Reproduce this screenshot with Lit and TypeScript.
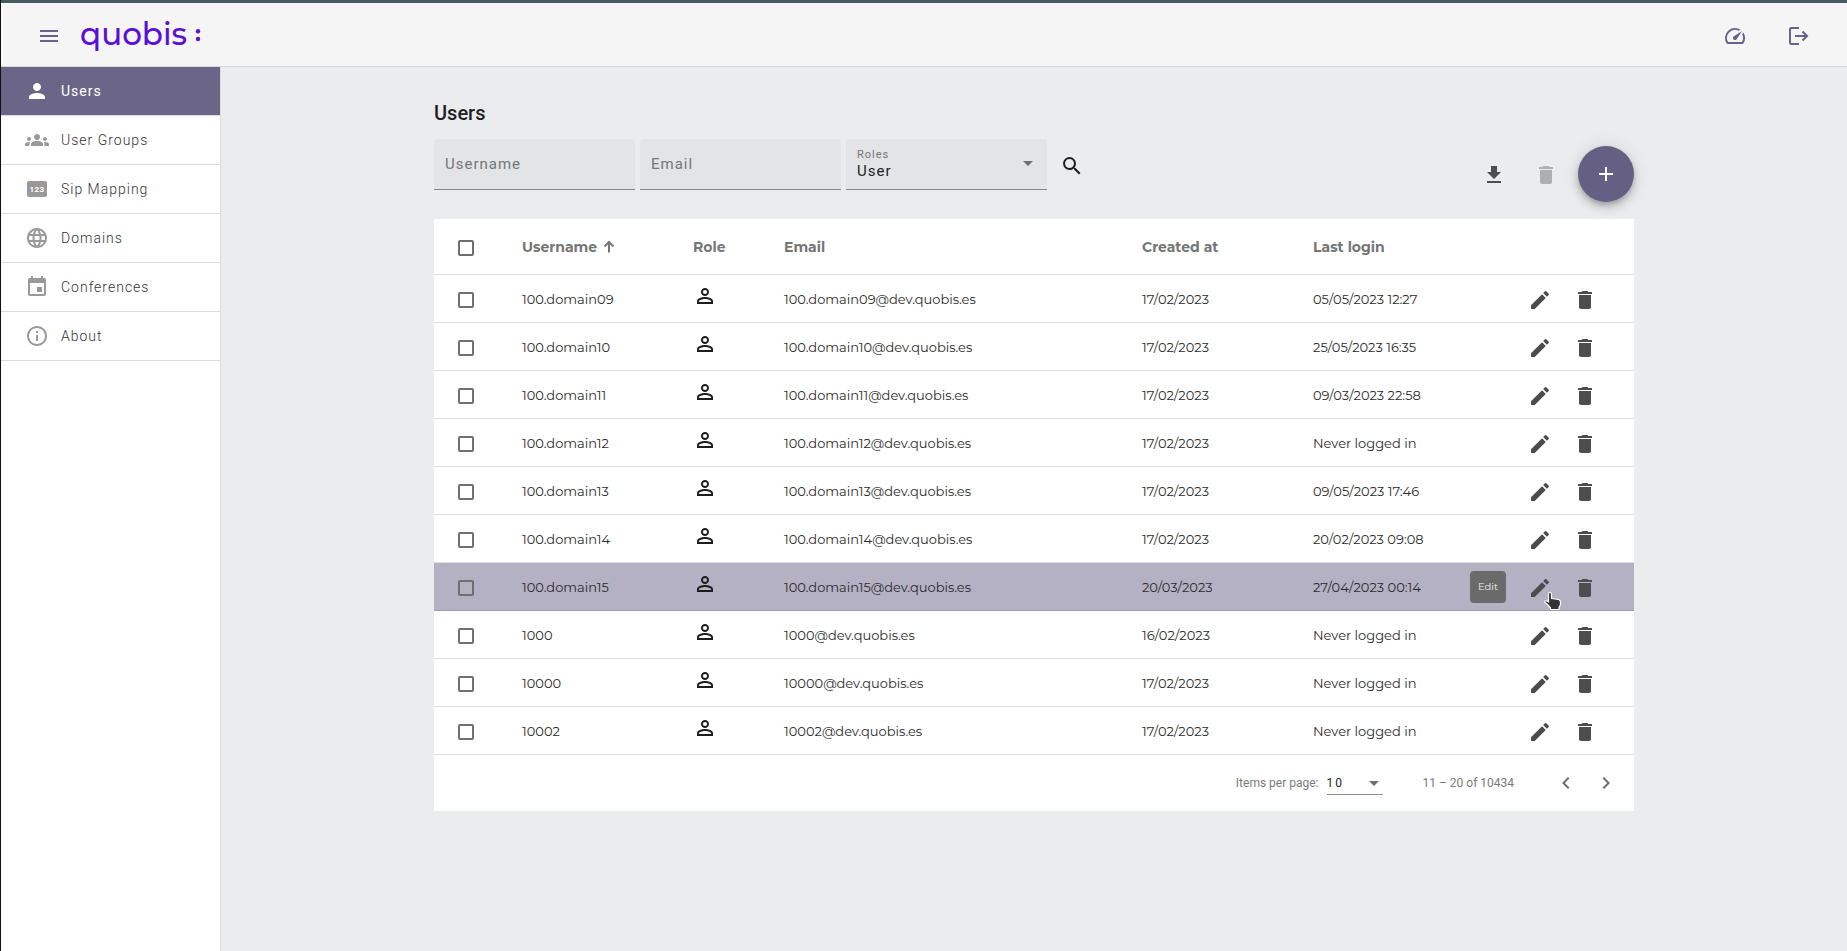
import { LitElement, html, css, svg } from "lit";
import { customElement, property, state } from "lit/decorators.js";
import { classMap } from "lit/directives/class-map.js";

const ICONS: Record<string, unknown> = {
  menu: svg`<path d="M3 18h18v-2H3v2zm0-5h18v-2H3v2zm0-7v2h18V6H3z"/>`,
  person: svg`<path d="M12 12c2.21 0 4-1.79 4-4s-1.79-4-4-4-4 1.79-4 4 1.79 4 4 4zm0 2c-2.67 0-8 1.34-8 4v2h16v-2c0-2.66-5.33-4-8-4z"/>`,
  personOutline: svg`<path d="M12 5.9a2.1 2.1 0 1 1 0 4.2 2.1 2.1 0 0 1 0-4.2m0 9c2.97 0 6.1 1.46 6.1 2.1v1.1H5.9V17c0-.64 3.13-2.1 6.1-2.1M12 4C9.79 4 8 5.79 8 8s1.79 4 4 4 4-1.79 4-4-1.79-4-4-4zm0 9c-2.67 0-8 1.34-8 4v3h16v-3c0-2.66-5.33-4-8-4z"/>`,
  groups: svg`<path d="M12 12.75c1.63 0 3.07.39 4.24.9 1.08.48 1.76 1.56 1.76 2.73V18H6v-1.61c0-1.18.68-2.26 1.76-2.73 1.17-.52 2.61-.91 4.24-.91zM4 13c1.1 0 2-.9 2-2s-.9-2-2-2-2 .9-2 2 .9 2 2 2zm1.13 1.1c-.37-.06-.74-.1-1.13-.1-.99 0-1.93.21-2.78.58C.48 14.9 0 15.62 0 16.43V18h4.5v-1.61c0-.83.23-1.61.63-2.29zM20 13c1.1 0 2-.9 2-2s-.9-2-2-2-2 .9-2 2 .9 2 2 2zm4 3.43c0-.81-.48-1.53-1.22-1.85-.85-.37-1.79-.58-2.78-.58-.39 0-.76.04-1.13.1.4.68.63 1.46.63 2.29V18H24v-1.57zM12 6c1.66 0 3 1.34 3 3s-1.34 3-3 3-3-1.34-3-3 1.34-3 3-3z"/>`,
  digits: svg`<rect x="2" y="4" width="20" height="16" rx="2"/><text x="12" y="15" text-anchor="middle" font-family="Roboto, sans-serif" font-size="8" font-weight="700" letter-spacing="0.4" fill="#fff">123</text>`,
  globe: svg`<path d="M11.99 2C6.47 2 2 6.48 2 12s4.47 10 9.99 10C17.52 22 22 17.52 22 12S17.52 2 11.99 2zm6.93 6h-2.95c-.32-1.25-.78-2.45-1.38-3.56 1.84.63 3.37 1.91 4.33 3.56zM12 4.04c.83 1.2 1.48 2.53 1.91 3.96h-3.82c.43-1.43 1.08-2.76 1.91-3.96zM4.26 14C4.1 13.36 4 12.69 4 12s.1-1.36.26-2h3.38c-.08.66-.14 1.32-.14 2 0 .68.06 1.34.14 2H4.26zm.82 2h2.95c.32 1.25.78 2.45 1.38 3.56-1.84-.63-3.37-1.9-4.33-3.56zm2.95-8H5.08c.96-1.66 2.49-2.93 4.33-3.56C8.81 5.55 8.35 6.75 8.03 8zM12 19.96c-.83-1.2-1.48-2.53-1.91-3.96h3.82c-.43 1.43-1.08 2.76-1.91 3.96zM14.34 14H9.66c-.09-.66-.16-1.32-.16-2 0-.68.07-1.35.16-2h4.68c.09.65.16 1.32.16 2 0 .68-.07 1.34-.16 2zm.25 5.56c.6-1.11 1.06-2.31 1.38-3.56h2.95c-.96 1.65-2.49 2.93-4.33 3.56zM16.36 14c.08-.66.14-1.32.14-2 0-.68-.06-1.34-.14-2h3.38c.16.64.26 1.31.26 2s-.1 1.36-.26 2h-3.38z"/>`,
  event: svg`<path d="M17 12h-5v5h5v-5zM16 1v2H8V1H6v2H5c-1.11 0-1.99.9-1.99 2L3 19c0 1.1.89 2 2 2h14c1.1 0 2-.9 2-2V5c0-1.1-.9-2-2-2h-1V1h-2zm3 18H5V8h14v11z"/>`,
  info: svg`<path d="M11 7h2v2h-2zm0 4h2v6h-2zm1-9C6.48 2 2 6.48 2 12s4.48 10 10 10 10-4.48 10-10S17.52 2 12 2zm0 18c-4.41 0-8-3.59-8-8s3.59-8 8-8 8 3.59 8 8-3.59 8-8 8z"/>`,
  speed: svg`<path d="M20.38 8.57l-1.23 1.85a8 8 0 0 1-.22 7.58H5.07A8 8 0 0 1 15.58 6.85l1.85-1.23A10 10 0 0 0 3.35 19a2 2 0 0 0 1.72 1h13.85a2 2 0 0 0 1.74-1 10 10 0 0 0-.27-10.44zm-9.79 6.84a2 2 0 0 0 2.83 0l5.66-8.49-8.49 5.66a2 2 0 0 0 0 2.83z"/>`,
  logout: svg`<path fill="none" stroke="currentColor" stroke-width="2" d="M12 4H4.5Q3 4 3 5.5V18.5Q3 20 4.5 20H12M8 12h12M15.5 7.5 20 12l-4.5 4.5"/>`,
  search: svg`<path d="M15.5 14h-.79l-.28-.27A6.471 6.471 0 0 0 16 9.5 6.5 6.5 0 1 0 9.5 16c1.61 0 3.09-.59 4.23-1.57l.27.28v.79l5 4.99L20.49 19l-4.99-5zm-6 0C7.01 14 5 11.99 5 9.5S7.01 5 9.5 5 14 7.01 14 9.5 11.99 14 9.5 14z"/>`,
  download: svg`<path d="M19 9h-4V3H9v6H5l7 7 7-7zM5 18v2h14v-2H5z"/>`,
  trash: svg`<path d="M6 19c0 1.1.9 2 2 2h8c1.1 0 2-.9 2-2V7H6v12zM19 4h-3.5l-1-1h-5l-1 1H5v2h14V4z"/>`,
  plus: svg`<path d="M19 13h-6v6h-2v-6H5v-2h6V5h2v6h6v2z"/>`,
  edit: svg`<path d="M3 17.25V21h3.75L17.81 9.94l-3.75-3.75L3 17.25zM20.71 7.04a.996.996 0 0 0 0-1.41l-2.34-2.34a.996.996 0 0 0-1.41 0l-1.83 1.83 3.75 3.75 1.83-1.83z"/>`,
  left: svg`<path d="M15.41 7.41 14 6l-6 6 6 6 1.41-1.41L10.83 12z"/>`,
  right: svg`<path d="M10 6 8.59 7.41 13.17 12l-4.58 4.59L10 18l6-6z"/>`,
  sort: svg`<path fill="none" stroke="currentColor" stroke-width="2" d="M12 17.5V7M7.5 11.5 12 7l4.5 4.5"/>`,
};

@customElement("ui-icon")
export class UiIcon extends LitElement {
  @property() name = "";
  static styles = css`
    :host { display: block; width: 24px; height: 24px; flex: none; }
    .glyph { display: block; width: 100%; height: 100%; fill: currentColor; }
  `;
  render() {
    return html`<svg class="glyph" viewBox="0 0 24 24" aria-hidden="true">${ICONS[this.name]}</svg>`;
  }
}

@customElement("top-bar")
export class TopBar extends LitElement {
  static styles = css`
    :host { display: block; }
    .bar {
      display: flex; align-items: center; justify-content: space-between;
      height: 67px; box-sizing: border-box; padding: 2px 36px 0;
      background: #f5f5f5; border-top: 3px solid #475a62; border-bottom: 1px solid #d8d8d9;
      color: #67628a;
    }
    .group { display: flex; align-items: center; }
    .brand { gap: 19px; }
    .tools { gap: 40px; }
    .btn { border: 0; padding: 0; background: none; color: inherit; cursor: pointer; }
    .logo { display: flex; align-items: center; gap: 8px; color: #5a0fd8; text-decoration: none; }
    .word { margin-top: -4px; font: 500 31px/40px Montserrat, Lato, sans-serif; }
    .dots { display: block; width: 6px; height: 14px; fill: currentColor; }
  `;
  render() {
    return html`<header class="bar">
      <div class="group brand">
        <button class="btn" aria-label="Menu"><ui-icon name="menu"></ui-icon></button>
        <a class="logo" href="#home" aria-label="quobis">
          <span class="word">quobis</span>
          <svg class="dots" viewBox="0 0 6 14" aria-hidden="true"><circle cx="3" cy="2.3" r="2.2"/><circle cx="3" cy="10" r="2.2"/></svg>
        </a>
      </div>
      <div class="group tools">
        <button class="btn" aria-label="Dashboard"><ui-icon name="speed"></ui-icon></button>
        <button class="btn" aria-label="Log out"><ui-icon name="logout"></ui-icon></button>
      </div>
    </header>`;
  }
}

@customElement("side-nav")
export class SideNav extends LitElement {
  @state() private items = [
    { label: "Users", icon: "person" },
    { label: "User Groups", icon: "groups" },
    { label: "Sip Mapping", icon: "digits" },
    { label: "Domains", icon: "globe" },
    { label: "Conferences", icon: "event" },
    { label: "About", icon: "info" },
  ];
  static styles = css`
    :host { display: block; background: #fff; border-right: 1px solid #dcdcde; }
    .item {
      display: flex; align-items: center; gap: 12px; height: 48px; padding: 0 24px;
      border-bottom: 1px solid #dcdcdc; color: #333; text-decoration: none;
      font: 300 14px/20px Roboto, sans-serif; letter-spacing: 1px;
    }
    .icon { color: #999; }
    .active { background: #6b6687; color: #fff; font-weight: 400; }
    .active .icon { color: #fff; }
  `;
  render() {
    return html`<nav>${this.items.map(
      (item, i) => html`<a class=${classMap({ item: true, active: i === 0 })} href="#${item.icon}">
        <ui-icon class="icon" name=${item.icon}></ui-icon><span>${item.label}</span>
      </a>`
    )}</nav>`;
  }
}

@customElement("user-filters")
export class UserFilters extends LitElement {
  static styles = css`
    :host { display: block; font-family: Roboto, sans-serif; }
    .row { display: flex; align-items: flex-start; justify-content: space-between; height: 80px; }
    .fields { display: flex; gap: 5px; }
    .field {
      position: relative; display: flex; width: 201px; height: 51px; box-sizing: border-box;
      background: #e2e4e5; border-bottom: 1px solid #868788; border-radius: 4px 4px 0 0;
    }
    .control {
      flex: 1; min-width: 0; margin: 0; padding: 0 11px; border: 0; background: none; outline: none;
      appearance: none; font: 400 15px/20px Roboto, sans-serif; letter-spacing: 1px; color: #222;
    }
    .role { padding-top: 14px; }
    .label {
      position: absolute; left: 11px; top: 15px; font-size: 15px; line-height: 20px;
      letter-spacing: 1px; color: #757677; pointer-events: none;
    }
    .float { top: 8px; font-size: 11px; line-height: 16px; }
    .caret { position: absolute; right: 14px; top: 22px; border: 5px solid transparent; border-top-color: #6f7071; border-bottom: 0; pointer-events: none; }
    .btn { border: 0; padding: 0; background: none; color: #4d4d4d; cursor: pointer; }
    .search { margin: 15px 0 0 8px; color: #1f1f1f; }
    .actions { display: flex; align-items: center; margin-top: 7px; }
    .tool { padding-top: 2px; }
    .remove { margin: 0 20px 0 28px; color: #adaeaf; }
    .add {
      display: grid; place-items: center; width: 56px; height: 56px; border-radius: 50%;
      background: #656083; color: #fff;
      box-shadow: 0 3px 5px -1px rgba(0,0,0,.2), 0 6px 10px rgba(0,0,0,.14), 0 1px 18px rgba(0,0,0,.12);
    }
  `;
  render() {
    return html`<div class="row">
      <form class="fields">
        <div class="field"><label class="label" for="u">Username</label><input id="u" class="control" /></div>
        <div class="field"><label class="label" for="e">Email</label><input id="e" class="control" /></div>
        <div class="field">
          <label class="label float" for="r">Roles</label>
          <select id="r" class="control role"><option>User</option></select>
          <span class="caret"></span>
        </div>
        <div><button type="button" class="btn search" aria-label="Search"><ui-icon name="search"></ui-icon></button></div>
      </form>
      <div class="actions">
        <button class="btn tool" aria-label="Download"><ui-icon name="download"></ui-icon></button>
        <button class="btn tool remove" aria-label="Delete selected" disabled><ui-icon name="trash"></ui-icon></button>
        <button class="btn add" aria-label="Add user"><ui-icon name="plus"></ui-icon></button>
      </div>
    </div>`;
  }
}

interface User { name: string; created: string; login: string; }

@customElement("user-table")
export class UserTable extends LitElement {
  @state() private hovered = "100.domain15";
  @state() private users: User[] = [
    { name: "100.domain09", created: "17/02/2023", login: "05/05/2023 12:27" },
    { name: "100.domain10", created: "17/02/2023", login: "25/05/2023 16:35" },
    { name: "100.domain11", created: "17/02/2023", login: "09/03/2023 22:58" },
    { name: "100.domain12", created: "17/02/2023", login: "Never logged in" },
    { name: "100.domain13", created: "17/02/2023", login: "09/05/2023 17:46" },
    { name: "100.domain14", created: "17/02/2023", login: "20/02/2023 09:08" },
    { name: "100.domain15", created: "20/03/2023", login: "27/04/2023 00:14" },
    { name: "1000", created: "16/02/2023", login: "Never logged in" },
    { name: "10000", created: "17/02/2023", login: "Never logged in" },
    { name: "10002", created: "17/02/2023", login: "Never logged in" },
  ];
  static styles = css`
    :host { display: block; background: #fff; }
    .table {
      width: 100%; table-layout: fixed; border-collapse: separate; border-spacing: 0;
      font: 400 13px/20px Montserrat, Inter, sans-serif; color: #2b2b2b;
    }
    .c-check { width: 88px; }
    .c-mid { width: 171px; }
    .c-role { width: 91px; }
    .c-act { width: 150px; }
    .th, .td { box-sizing: border-box; padding: 0; text-align: left; border-bottom: 1px solid #dedede; white-space: nowrap; }
    .th { height: 56px; font-size: 14px; font-weight: 700; color: #757575; }
    .td { height: 48px; }
    .first { padding-left: 24px; }
    .sorted { display: flex; align-items: center; }
    .check {
      display: block; appearance: none; width: 16px; height: 16px; margin: 2px 0 0; box-sizing: border-box;
      border: 2px solid #6f6f6f; border-radius: 2px; background: none;
    }
    .role { display: block; margin: 0 0 6px; color: #1c1c1c; }
    .acts { display: flex; align-items: center; gap: 21px; padding: 2px 0 0 44px; }
    .btn { position: relative; display: block; border: 0; padding: 0; background: none; color: #4d4d4d; cursor: pointer; }
    .hover .td { background: #b5b1c4; border-bottom-color: #9f9cad; }
    .tip {
      position: absolute; right: 46px; top: -5px; padding: 0 8px; height: 32px; border-radius: 4px;
      background: #6b6a6b; color: #efefef; font: 400 10px/32px Montserrat, Inter, sans-serif;
    }
    .hand { position: absolute; left: 15px; top: 15px; width: 20px; height: 20px; }
    .pager {
      display: flex; align-items: center; justify-content: flex-end; height: 56px; padding-right: 16px;
      font: 400 12px/16px Roboto, sans-serif; color: #7a7a7a;
    }
    .size { position: relative; margin: 0 40px 0 8px; }
    .select {
      display: block; appearance: none; width: 56px; height: 24px; padding: 0; border: 0; border-bottom: 1px solid #8f8f8f;
      border-radius: 0; background: none; font: 400 12px/16px Roboto, sans-serif; letter-spacing: 2px; color: #222;
    }
    .caret { position: absolute; right: 4px; top: 10px; border: 5px solid transparent; border-top-color: #6f6f6f; border-bottom: 0; pointer-events: none; }
    .pages { display: flex; gap: 16px; margin-left: 40px; }
    .pages .btn { color: #6f6f6f; }
  `;
  private row(u: User) {
    const on = u.name === this.hovered;
    return html`<tr class=${classMap({ hover: on })}>
      <td class="td first"><input class="check" type="checkbox" aria-label="Select ${u.name}" /></td>
      <td class="td">${u.name}</td>
      <td class="td"><ui-icon class="role" name="personOutline"></ui-icon></td>
      <td class="td">${u.name}@dev.quobis.es</td>
      <td class="td">${u.created}</td>
      <td class="td">${u.login}</td>
      <td class="td"><div class="acts">
        <button class="btn" aria-label="Edit ${u.name}">
          <ui-icon name="edit"></ui-icon>
          ${on ? html`<span class="tip" role="tooltip">Edit</span>
            <svg class="hand" viewBox="0 0 20 20" aria-hidden="true"><path fill="#333" stroke="#fff" stroke-width="1.2" stroke-linejoin="round" d="M5.5 3Q5.5 1.5 7 1.5T8.5 3V7.5L15.5 8.5Q17.5 9 17.5 11V13.5L16 16.5V18.5H7.5V17L5 14 2 11.5Q1.5 9.5 3.5 9.8L5.5 11z"/></svg>` : ""}
        </button>
        <button class="btn" aria-label="Delete ${u.name}"><ui-icon name="trash"></ui-icon></button>
      </div></td>
    </tr>`;
  }
  render() {
    return html`<table class="table">
      <colgroup>
        <col class="c-check" /><col class="c-mid" /><col class="c-role" /><col />
        <col class="c-mid" /><col class="c-mid" /><col class="c-act" />
      </colgroup>
      <thead><tr>
        <th class="th first"><input class="check" type="checkbox" aria-label="Select all" /></th>
        <th class="th"><span class="sorted">Username<ui-icon name="sort"></ui-icon></span></th>
        <th class="th">Role</th><th class="th">Email</th><th class="th">Created at</th>
        <th class="th">Last login</th><th class="th" aria-label="Actions"></th>
      </tr></thead>
      <tbody>${this.users.map((u) => this.row(u))}</tbody>
    </table>
    <div class="pager">
      <label for="size">Items per page:</label>
      <span class="size"><select id="size" class="select"><option>10</option></select><span class="caret"></span></span>
      <span>11 – 20 of 10434</span>
      <span class="pages">
        <button class="btn" aria-label="Previous page"><ui-icon name="left"></ui-icon></button>
        <button class="btn" aria-label="Next page"><ui-icon name="right"></ui-icon></button>
      </span>
    </div>`;
  }
}

@customElement("app-root")
export class AppRoot extends LitElement {
  static styles = css`
    :host { display: flex; flex-direction: column; min-height: 100vh; box-sizing: border-box; border-left: 1px solid #111; background: #ebecee; }
    .body { display: grid; grid-template-columns: 220px minmax(0, 1fr); flex: 1; }
    .main { padding: 34px 24px; }
    .content { max-width: 1200px; margin: 0 auto; }
    .title { margin: 0 0 14px; font: 500 20px/24px Roboto, sans-serif; color: #1f1f1f; }
  `;
  render() {
    return html`<top-bar></top-bar>
      <div class="body">
        <side-nav></side-nav>
        <main class="main"><div class="content">
          <h1 class="title">Users</h1>
          <user-filters></user-filters>
          <user-table></user-table>
        </div></main>
      </div>`;
  }
}
